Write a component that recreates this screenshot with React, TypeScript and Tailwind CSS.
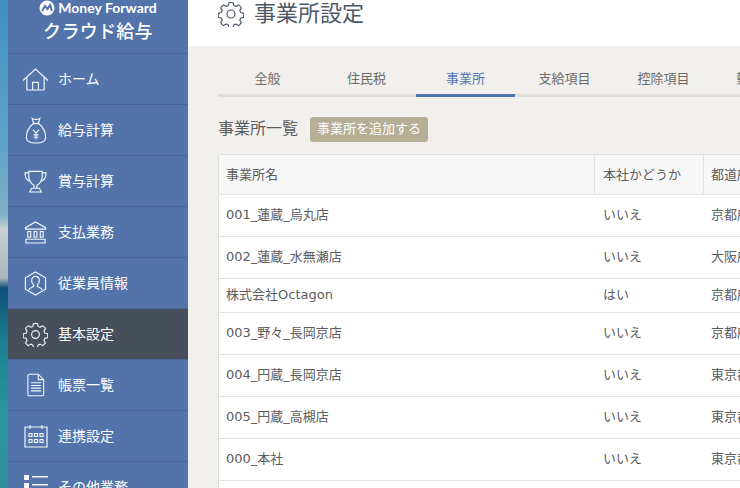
import { ReactNode } from "react";

const jp = "font-['DejaVu_Sans','Noto_Sans_CJK_JP','Noto_Sans',sans-serif]";

const GearIcon = ({ className }: { className?: string }) => (
  <svg viewBox="0 0 26 26" className={className} fill="none" stroke="currentColor" strokeWidth="1.2" strokeLinejoin="round">
    <path d="M10.800 1.200c.6-.4 3.800-.4 4.400 0l.7 3 2.200.9 2.600-1.600c.7.100 2.900 2.300 3.100 3.100l-1.600 2.600.9 2.200 3 .7c.4.600.4 3.800 0 4.400l-3 .7-.9 2.200 1.600 2.600c-.2.800-2.400 3-3.100 3.100l-2.600-1.600-2.200.9-.7 3c-.6.400-3.800.4-4.400 0l-.7-3-2.200-.9-2.600 1.600c-.7-.100-2.900-2.300-3.100-3.100l1.600-2.600-.9-2.200-3-.7c-.4-.6-.4-3.800 0-4.400l3-.7.9-2.200-1.600-2.600c.2-.8 2.400-3 3.100-3.100l2.600 1.600 2.200-.9z" transform="translate(.6 .6) scale(.954)" />
    <circle cx="13" cy="13" r="4" />
  </svg>
);

const HomeIcon = () => (
  <svg viewBox="0 0 28 24" className="h-[23px] w-[27px]" fill="none" stroke="currentColor" strokeWidth="1.2">
    <path d="M1 13 14 1l13 12M5 10v13h18V10M11 23v-8h6v8" />
  </svg>
);

const BagIcon = () => (
  <svg viewBox="0 0 22 28" className="h-[27px] w-[22px]" fill="none" stroke="currentColor" strokeWidth="1.2">
    <path d="M7 1.500c2 1 6 1 8 0l-1.500 5h-5zM8 7c-5 4-7 9-7 14 0 4 3 6 10 6s10-2 10-6c0-5-2-10-7-14z" />
    <path d="M8 13l3 4 3-4M11 17v6M8.500 18.500h5M8.500 21h5" />
  </svg>
);

const TrophyIcon = () => (
  <svg viewBox="0 0 24 24" className="h-[25px] w-[23px]" fill="none" stroke="currentColor" strokeWidth="1.2">
    <path d="M5 1.500h14v5c0 5-3 8-5.500 9.500v3h-3v-3C8 14.500 5 11.500 5 6.500zM5 3H1c0 5 2 8 6 9M19 3h4c0 5-2 8-6 9M6 23h12l-2-4H8z" />
  </svg>
);

const BankIcon = () => (
  <svg viewBox="0 0 24 24" className="h-[25px] w-[23px]" fill="none" stroke="currentColor" strokeWidth="1.2">
    <path d="M12 1 1.500 7v1.500h21V7zM4 11h3v6H4zM10.500 11h3v6h-3zM17 11h3v6h-3zM2 19h20v4H2z" />
  </svg>
);

const PersonIcon = () => (
  <svg viewBox="0 0 24 26" className="h-[25px] w-[23px]" fill="none" stroke="currentColor" strokeWidth="1.2">
    <path d="M12 1 22.500 7v12L12 25 1.500 19V7z" />
    <path d="M5 19.500c1-2 3-2.500 5-3.500v-1.500C8.500 13 8 11.500 8 10c0-3 2-4.500 4-4.500S16 7 16 10c0 1.500-.5 3-2 4.500V16c2 1 4 1.500 5 3.500" />
  </svg>
);

const DocIcon = () => (
  <svg viewBox="0 0 20 26" className="h-[24px] w-[18px]" fill="none" stroke="currentColor" strokeWidth="1.2">
    <path d="M2.500 1h10l6 6v16.500a1.500 1.500 0 0 1-1.500 1.500H2.500A1.500 1.500 0 0 1 1 23.500v-21A1.500 1.500 0 0 1 2.500 1zM12.500 1v6h6" />
    <path d="M4.500 10.500h11M4.500 13.500h11M4.500 16.500h11M4.500 19.500h11" />
  </svg>
);

const CalendarIcon = () => (
  <svg viewBox="0 0 24 24" className="h-[24px] w-[24px]" fill="none" stroke="currentColor" strokeWidth="1.2">
    <path d="M1 3h22v20H1zM6 1v4M18 1v4" />
    <path d="M5 9.500h3v3H5zM10.500 9.500h3v3h-3zM16 9.500h3v3h-3zM5 15.500h3v3H5zM10.500 15.500h3v3h-3zM16 15.500h3v3h-3z" />
  </svg>
);

const ListIcon = () => (
  <svg viewBox="0 0 24 24" className="h-[24px] w-[24px]" fill="currentColor">
    <path d="M0 0h5v5H0zM8 1h16v1.500H8zM0 8h5v5H0zM8 9h16v1.500H8z" />
  </svg>
);

type NavItem = { label: string; icon: ReactNode; active?: boolean };

const navItems: NavItem[] = [
  { label: "ホーム", icon: <HomeIcon /> },
  { label: "給与計算", icon: <BagIcon /> },
  { label: "賞与計算", icon: <TrophyIcon /> },
  { label: "支払業務", icon: <BankIcon /> },
  { label: "従業員情報", icon: <PersonIcon /> },
  { label: "基本設定", icon: <GearIcon className="h-[25px] w-[25px]" />, active: true },
  { label: "帳票一覧", icon: <DocIcon /> },
  { label: "連携設定", icon: <CalendarIcon /> },
  { label: "その他業務", icon: <ListIcon /> },
];

const tabs = ["全般", "住民税", "事業所", "支給項目", "控除項目", "勤怠項目"];

const rows = [
  { name: "001_蓮蔵_烏丸店", main: "いいえ", pref: "京都府", h: "h-[42px]" },
  { name: "002_蓮蔵_水無瀬店", main: "いいえ", pref: "大阪府", h: "h-[42px]" },
  { name: "株式会社Octagon", main: "はい", pref: "京都府", h: "h-[34px]" },
  { name: "003_野々_長岡京店", main: "いいえ", pref: "京都府", h: "h-[42px]" },
  { name: "004_円蔵_長岡京店", main: "いいえ", pref: "東京都", h: "h-[42px]" },
  { name: "005_円蔵_高槻店", main: "いいえ", pref: "東京都", h: "h-[42px]" },
  { name: "000_本社", main: "いいえ", pref: "東京都", h: "h-[42px]" },
];

export default function App() {
  return (
    <div className={`${jp} flex h-[488px] w-[740px] overflow-hidden bg-white`}>
      {/* photo strip left of the nav */}
      <div className="w-[8px] shrink-0 bg-[linear-gradient(180deg,#3f8fc4_0%,#5ea4c8_30%,#7fb0c4_44%,#c8d0d4_47%,#a8b4bc_57%,#0e4f78_59%,#1a7f90_70%,#2a97a0_85%,#2f8f98_100%)]" />
      <aside className="w-[180px] shrink-0 bg-[#5274ab] text-white">
        <div className="flex h-[54px] flex-col items-center border-b border-[#466698]">
          <div className="flex h-[15px] items-center gap-[3px] font-['Lato',sans-serif] text-[14px] font-bold leading-none">
            <svg viewBox="0 0 16 16" className="h-[16px] w-[16px]">
              <circle cx="8" cy="8" r="7.500" fill="#fff" />
              <path d="M3 11 6 6l2.500 3L11 5l2 6" fill="none" stroke="#5274ab" strokeWidth="2" />
            </svg>
            <span>Money Forward</span>
          </div>
          <div className="mt-[6px] text-[18px] font-medium leading-[22px] tracking-[0.3px]">クラウド給与</div>
        </div>
        {navItems.map((item) => (
          <div
            key={item.label}
            className={`flex h-[51px] items-center border-b border-[#466698] ${item.active ? "bg-[#474f5c]" : ""}`}
          >
            <div className="flex w-[50px] shrink-0 justify-center pl-[5px] text-[#f2f5fa]">{item.icon}</div>
            <span className="pb-[1px] text-[14px] leading-none">{item.label}</span>
          </div>
        ))}
      </aside>
      <main className="flex min-w-0 flex-1 flex-col">
        <header className="flex h-[46px] shrink-0 items-start gap-[10px] bg-white pl-[30px] pt-[1px] text-[#4e5866]">
          <GearIcon className="h-[26px] w-[26px]" />
          <h1 className="text-[22px] leading-[25px]">事業所設定</h1>
        </header>
        <div className="flex-1 bg-[#f1f0ec] pl-[30px] pt-[24px] text-[#5c5c5c]">
          <div className="flex w-[522px] border-b-[3px] border-[#dfdedb]">
            {tabs.map((t, i) => (
              <div
                key={t}
                className={`-mb-[3px] h-[27px] w-[99px] shrink-0 border-b-[3px] text-center text-[13px] leading-[18px] ${
                  i === 2 ? "border-[#4f76b3] text-[#4f76b3]" : "border-transparent text-[#6b6b6b]"
                }`}
              >
                {t}
              </div>
            ))}
          </div>
          <div className="mt-[20px] flex items-center gap-[12px]">
            <h2 className="pb-[2px] text-[16px] leading-[23px]">事業所一覧</h2>
            <button className="h-[25px] w-[118px] rounded-[3px] bg-[#b5af96] pb-[2px] text-[13px] text-white">事業所を追加する</button>
          </div>
          <div className="mt-[12px] w-[560px] overflow-hidden rounded-tl-[3px] border-l border-t border-[#dfdedb] bg-white text-[13px]">
            <div className="flex h-[40px] items-center border-b border-[#e3e3e1] bg-[#f7f7f7] leading-none">
              <div className="flex h-full w-[376px] shrink-0 items-center border-r border-[#e3e3e1] pb-[1px] pl-[7px]">事業所名</div>
              <div className="flex h-full w-[109px] shrink-0 items-center border-r border-[#e3e3e1] pb-[1px] pl-[8px]">本社かどうか</div>
              <div className="flex h-full flex-1 items-center pb-[1px] pl-[7px]">都道府県</div>
            </div>
            {rows.map((r) => (
              <div key={r.name} className={`flex ${r.h} items-center border-b border-[#e3e3e1] pb-[1px] leading-[18px]`}>
                <div className="w-[376px] shrink-0 pl-[7px]">{r.name}</div>
                <div className="w-[109px] shrink-0 pl-[8px]">{r.main}</div>
                <div className="flex-1 pl-[7px]">{r.pref}</div>
              </div>
            ))}
            <div className="h-[42px]" />
          </div>
        </div>
      </main>
    </div>
  );
}
